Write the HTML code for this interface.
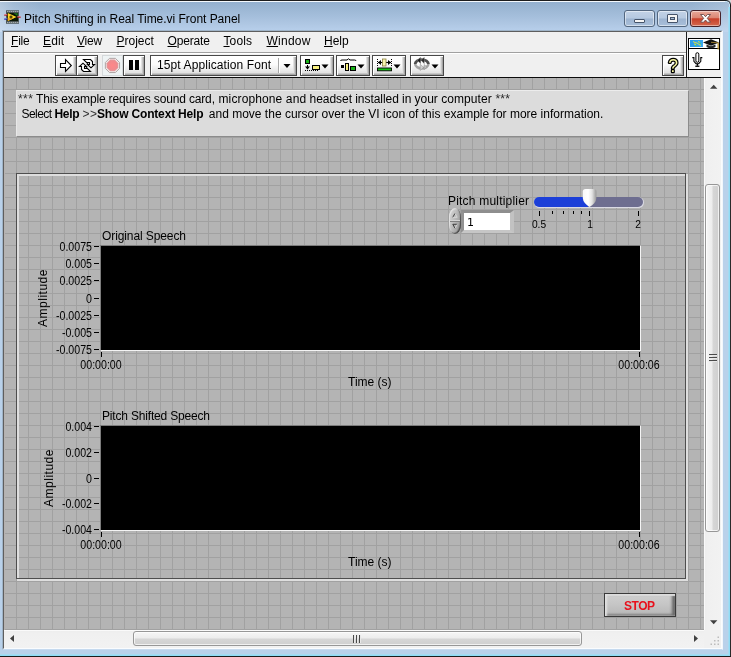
<!DOCTYPE html>
<html>
<head>
<meta charset="utf-8">
<title>Pitch Shifting in Real Time.vi Front Panel</title>
<style>
*{box-sizing:border-box;margin:0;padding:0}
html,body{width:731px;height:657px;overflow:hidden}
body{position:relative;background:#dadada;font-family:"Liberation Sans",sans-serif;font-size:12px;color:#000;line-height:14px}
.a{position:absolute}
.t{position:absolute;white-space:pre;line-height:14px;height:14px;will-change:opacity}
/* window frame */
#frame{left:0;top:0;width:731px;height:657px;background:#b9d1ea;border-radius:0 5px 0 0;overflow:hidden}
#titlebg{left:0;top:0;width:731px;height:32px;background:linear-gradient(180deg,#94b0ce 0px,#94b0ce 2px,#9bb6d3 8px,#a4bedb 16px,#afc7e3 24px,#b6ceea 30px)}
#titlehl{left:0;top:0;width:731px;height:32px;background:linear-gradient(90deg,rgba(255,255,255,.28) 0,rgba(255,255,255,.12) 14px,rgba(255,255,255,0) 40px,rgba(255,255,255,0) 690px,rgba(255,255,255,.16) 731px)}
/* client */
#client{left:4px;top:32px;width:717px;height:616px;background:#f0f0f0}
#panel{left:4px;top:78px;width:700px;height:552px;background-color:#b4b4b4;
 background-image:linear-gradient(90deg,#a1a1a1 1px,transparent 1px),linear-gradient(180deg,#a1a1a1 1px,transparent 1px);
 background-size:12px 12px;background-position:0px -1px;overflow:hidden}
.menu{top:34px;font-size:12px;line-height:14px;white-space:pre}
.menu u{text-decoration:underline;text-decoration-thickness:1px;text-underline-offset:0.5px}
.tb{position:absolute;top:55px;height:21px;border:1px solid #484848;background:linear-gradient(180deg,#ffffff 0,#fbfbfb 45%,#e6e6e6 80%,#d0d0d0 100%);box-shadow:inset 1px 1px 0 #fff,inset -1px -1px 0 #a6a6a6,inset -2px -2px 0 #c6c6c6,inset -3px -3px 0 #e2e2e2}
.sc{font-size:12px;transform:scaleX(.885);transform-origin:right center;text-align:right}
.scc{font-size:12px;transform:scaleX(.885);transform-origin:center center;text-align:center}
</style>
</head>
<body>
<div id="frame" class="a">
<div id="titlebg" class="a"></div>
<div id="titlehl" class="a"></div>
<!-- outer edges -->
<div class="a" style="left:0;top:0;width:731px;height:1px;background:#1c1c1c"></div>
<div class="a" style="left:0;top:1px;width:726px;height:1px;background:#f4f8fc"></div>
<div class="a" style="left:730px;top:0;width:1px;height:657px;background:#2a2a2a"></div>
<div class="a" style="left:728px;top:7px;width:1px;height:648px;background:#a6daf0"></div><div class="a" style="left:729px;top:7px;width:1px;height:649px;background:#8fdcf6"></div>
<div class="a" style="left:0;top:656px;width:731px;height:1px;background:#1c1c1c"></div>
<div class="a" style="left:0;top:654px;width:728px;height:1px;background:#a6daf0"></div><div class="a" style="left:0;top:655px;width:730px;height:1px;background:#8fdcf6"></div>
<svg class="a" style="left:725px;top:0px" width="6" height="7" viewBox="0 0 6 7"><path d="M1.500 0 L6 0 L6 4.500 L5.500 4.500 A4 4 0 0 0 1.500 0.500 Z" fill="#dadada"/><path d="M0 1.500 L1.500 1.500 A3 3 0 0 1 4.500 4.500 L4.500 7" fill="none" stroke="#c8e4f4" stroke-width="1"/><path d="M0 0.500 L1.500 0.500 A4 4 0 0 1 5.500 4.500 L5.500 7" fill="none" stroke="#1c1c1c" stroke-width="1"/></svg>
<!-- inner frame edges -->
<div class="a" style="left:2px;top:30px;width:721px;height:620px;border:1px solid #9fb4c8;border-right-color:#f2f6fb;border-bottom-color:#c6daef"></div>
<div class="a" style="left:3px;top:31px;width:719px;height:618px;border:1px solid #5e5e5e;border-right-color:#fafcfe;border-bottom-color:#fafcfe"></div>
</div>

<!-- title -->
<svg class="a" style="left:3px;top:10px" width="18" height="14" viewBox="0 0 18 16" preserveAspectRatio="none">
 <rect x="3" y="0.300" width="13" height="15.400" fill="#4c565a"/>
 <rect x="4" y="3.300" width="11" height="9.400" fill="#0a1606"/>
 <g fill="#d4dada"><rect x="4.300" y="1.200" width="1" height="1.200"/><rect x="6.300" y="1.200" width="1" height="1.200"/><rect x="8.300" y="1.200" width="1" height="1.200"/><rect x="10.300" y="1.200" width="1" height="1.200"/><rect x="12.300" y="1.200" width="1" height="1.200"/><rect x="14.300" y="1.200" width="1" height="1.200"/>
 <rect x="4.300" y="13.600" width="1" height="1.200"/><rect x="6.300" y="13.600" width="1" height="1.200"/><rect x="8.300" y="13.600" width="1" height="1.200"/><rect x="10.300" y="13.600" width="1" height="1.200"/><rect x="12.300" y="13.600" width="1" height="1.200"/><rect x="14.300" y="13.600" width="1" height="1.200"/></g>
 <rect x="1.200" y="4.600" width="3" height="0.900" fill="#f0a0a8"/><rect x="1.200" y="5.400" width="3.300" height="1.100" fill="#b01828"/>
 <rect x="1.200" y="9" width="3" height="0.900" fill="#c8d0f0"/><rect x="1.200" y="9.800" width="3.300" height="1.200" fill="#1010b0"/>
 <rect x="14.300" y="7" width="3.400" height="0.900" fill="#e08088"/><rect x="14.300" y="7.800" width="3.400" height="1.100" fill="#a81828"/>
 <path d="M10.500 3.600 L14.600 3.600 L14.600 6.800 Z" fill="#1e7a1e"/>
 <path d="M4.800 3.300 L13.600 8 L4.800 12.700 Z" fill="#ffd828"/>
 <path d="M4.800 9.200 L4.800 12.700 L11 9.400 Z" fill="#f0a820"/>
 <path d="M8 6.200 L8 9.800 M6.300 8 L9.700 8" stroke="#2a2400" stroke-width="1.300"/>
</svg>
<div class="t" style="left:24px;top:12px;font-size:12px;letter-spacing:-0.03px">Pitch Shifting in Real Time.vi Front Panel</div>

<!-- caption buttons -->
<div class="a" style="left:624px;top:10px;width:31px;height:17px;border:1px solid #53677f;border-radius:3px;background:linear-gradient(180deg,#c2d2e6 0,#b6c9e0 48%,#9db4d0 52%,#a8bfda 100%);box-shadow:inset 0 0 0 1px rgba(255,255,255,.5)"></div>
<div class="a" style="left:634px;top:19px;width:11px;height:4px;border:1px solid #45546a;border-radius:1px;background:#f4f4f4"></div>
<div class="a" style="left:657px;top:10px;width:31px;height:17px;border:1px solid #53677f;border-radius:3px;background:linear-gradient(180deg,#c2d2e6 0,#b6c9e0 48%,#9db4d0 52%,#a8bfda 100%);box-shadow:inset 0 0 0 1px rgba(255,255,255,.5)"></div>
<div class="a" style="left:667px;top:14px;width:11px;height:9px;border:1px solid #45546a;border-radius:1px;background:#f4f4f4"></div>
<div class="a" style="left:670px;top:17px;width:5px;height:3px;border:1px solid #45546a;background:#a8bcd4"></div>
<div class="a" style="left:690px;top:10px;width:31px;height:17px;border:1px solid #47232a;border-radius:3px;background:linear-gradient(180deg,#e8a99a 0,#dc8673 45%,#c8402a 52%,#d4684e 100%);box-shadow:inset 0 0 0 1px rgba(255,255,255,.45)"></div>
<svg class="a" style="left:698px;top:13px" width="15" height="12" viewBox="0 0 15 12"><path d="M2.500 1.500 L5.600 1.500 L7.500 3.700 L9.400 1.500 L12.500 1.500 L9.300 5.350 L12.500 9.200 L9.400 9.200 L7.500 7 L5.600 9.200 L2.500 9.200 L5.700 5.350 Z" fill="#fff" stroke="#6a4a4a" stroke-width="0.900" stroke-linejoin="round"/></svg>

<!-- client -->
<div id="client" class="a"></div>
<div class="a" style="left:4px;top:52px;width:682px;height:1px;background:#a0a0a0"></div>
<div class="a" style="left:4px;top:53px;width:682px;height:1px;background:#ffffff"></div>
<div class="a" style="left:4px;top:77px;width:717px;height:1px;background:#0c0c0c"></div>
<div class="a" style="left:686px;top:32px;width:1px;height:45px;background:#202020"></div>

<!-- menus -->
<div class="t menu" style="left:11px;letter-spacing:-0.2px"><u>F</u>ile</div>
<div class="t menu" style="left:43px;letter-spacing:0.15px"><u>E</u>dit</div>
<div class="t menu" style="left:77px;letter-spacing:-0.25px"><u>V</u>iew</div>
<div class="t menu" style="left:116.500px;letter-spacing:0px"><u>P</u>roject</div>
<div class="t menu" style="left:167.500px;letter-spacing:-0.15px"><u>O</u>perate</div>
<div class="t menu" style="left:223.500px;letter-spacing:0.1px"><u>T</u>ools</div>
<div class="t menu" style="left:266.500px;letter-spacing:0.25px"><u>W</u>indow</div>
<div class="t menu" style="left:324px;letter-spacing:0px"><u>H</u>elp</div>

<!-- TOOLBAR -->
<div id="toolbar">
<!-- run -->
<div class="tb" style="left:55px;width:22px"></div>
<svg class="a" style="left:58px;top:57px" width="16" height="17" viewBox="0 0 16 17"><path d="M2.5 6.5 L7.5 6.5 L7.5 2.7 L13.3 8.5 L7.5 14.3 L7.5 10.5 L2.5 10.5 Z" fill="#fff" stroke="#000" stroke-width="1.1" stroke-linejoin="miter"/></svg>
<!-- run continuously -->
<div class="tb" style="left:76px;width:22px"></div>
<svg class="a" style="left:78px;top:57px" width="18" height="17" viewBox="0 0 18 17">
 <g fill="#fff" stroke="#000" stroke-width="1.1" stroke-linejoin="miter">
 <path id="rc" d="M5.500 2.500 L12.500 2.500 L14.500 4.500 L14.500 7.500 L16.500 7.500 L13 10.800 L9.500 7.500 L11.500 7.500 L11.500 5.500 L8.500 5.500 Z"/>
 <path d="M5.500 2.500 L12.500 2.500 L14.500 4.500 L14.500 7.500 L16.500 7.500 L13 10.800 L9.500 7.500 L11.500 7.500 L11.500 5.500 L8.500 5.500 Z" transform="rotate(180 9 8.500)"/>
 <path d="M8.500 5.500 L11 8.300 M9.500 11.500 L7 8.700" fill="none"/>
 </g>
</svg>
<!-- abort -->
<div class="a" style="left:102px;top:55px;width:21px;height:21px;background:#eef3f4;border:1px solid #d4d8da"></div>
<svg class="a" style="left:104px;top:57px" width="17" height="17" viewBox="0 0 17 17"><defs><radialGradient id="ab" cx="0.5" cy="0.5" r="0.6"><stop offset="0" stop-color="#ff8688"/><stop offset="1" stop-color="#e88c90"/></radialGradient></defs><path d="M5.51 1.35 L11.39 1.35 L15.55 5.51 L15.55 11.39 L11.39 15.55 L5.51 15.55 L1.35 11.39 L1.35 5.51 Z" fill="#f3eaea" stroke="#a89c9c" stroke-width="0.9"/><path d="M6.13 2.85 L10.77 2.85 L14.05 6.13 L14.05 10.77 L10.77 14.05 L6.13 14.05 L2.85 10.77 L2.85 6.13 Z" fill="url(#ab)" stroke="#d8b0b0" stroke-width="0.5"/></svg>
<!-- pause -->
<div class="tb" style="left:123px;width:22px"></div>
<div class="a" style="left:129px;top:60px;width:4px;height:10px;background:#000"></div>
<div class="a" style="left:135px;top:60px;width:4px;height:10px;background:#000"></div>
<!-- font ring -->
<div class="tb" style="left:150px;width:147px"></div>
<div class="t" style="left:157px;top:58px;font-size:12px;letter-spacing:0.1px">15pt Application Font</div>
<div class="a" style="left:278px;top:58px;width:1px;height:15px;background:#a8a8a8"></div>
<div class="a" style="left:279px;top:58px;width:1px;height:15px;background:#fff"></div>
<svg class="a" style="left:282px;top:62px" width="10" height="8" viewBox="0 0 10 8"><path d="M1.500 2 L8.500 2 L5 6 Z" fill="#000"/></svg>
<!-- align -->
<div class="tb" style="left:300px;width:34px"></div>
<svg class="a" style="left:302px;top:57px" width="32" height="17" viewBox="0 0 32 17">
 <rect x="3.500" y="2.500" width="4" height="4" fill="#18b018" stroke="#000" stroke-width="1"/>
 <path d="M5.500 8 L5.500 10" stroke="#000" stroke-width="1"/><path d="M3 9.500 L8 9.500 L5.500 12.500 Z" fill="#000"/>
 <path d="M3 13.500 L17 13.500" stroke="#000" stroke-width="1" stroke-dasharray="1 1"/>
 <rect x="10.500" y="8.500" width="7" height="4" fill="#f8f080" stroke="#000" stroke-width="1"/>
 <path d="M19.500 7.500 L26.500 7.500 L23 11.500 Z" fill="#000"/>
</svg>
<!-- distribute -->
<div class="tb" style="left:336px;width:34px"></div>
<svg class="a" style="left:338px;top:57px" width="32" height="17" viewBox="0 0 32 17">
 <path d="M2.500 4 Q2.500 3 4 3 L9 3 L10.500 1.800 L12 3 L16.500 3 Q18 3 18 4" fill="none" stroke="#000" stroke-width="1"/>
 <rect x="3" y="8" width="3" height="3" fill="#000"/>
 <rect x="7.500" y="6.500" width="3" height="7" fill="#f8f080" stroke="#000" stroke-width="1"/>
 <rect x="12.500" y="9.500" width="5" height="4" fill="#18b018" stroke="#000" stroke-width="1"/>
 <path d="M19.500 7.500 L26.500 7.500 L23 11.500 Z" fill="#000"/>
</svg>
<!-- resize -->
<div class="tb" style="left:372px;width:34px"></div>
<svg class="a" style="left:374px;top:57px" width="32" height="17" viewBox="0 0 32 17">
 <path d="M3.500 2 L3.500 10 M17.500 2 L17.500 10" stroke="#000" stroke-width="1" stroke-dasharray="1 1"/>
 <path d="M4 5.500 L17 5.500" stroke="#000" stroke-width="1.100"/>
 <path d="M4 5.500 L7 3 L7 8 Z M17 5.500 L14 3 L14 8 Z" fill="#000"/>
 <rect x="8.500" y="2" width="3.500" height="7" fill="#f8f4b0" stroke="#8a8040" stroke-width="0.800"/>
 <rect x="3.500" y="11" width="14" height="2.800" fill="#18c018" stroke="#000" stroke-width="0.900"/>
 <path d="M19.500 7.500 L26.500 7.500 L23 11.500 Z" fill="#000"/>
</svg>
<!-- reorder -->
<div class="tb" style="left:410px;width:34px"></div>
<svg class="a" style="left:412px;top:57px" width="32" height="17" viewBox="0 0 32 17">
 <path d="M3.200 7 A6.600 4.400 0 0 1 16.400 7" stroke="#4e4e4e" stroke-width="2.900" fill="none"/>
 <path d="M3.200 7 A6.600 4.400 0 0 0 16.400 7" stroke="#a4a4a4" stroke-width="2.500" fill="none"/>
 <path d="M8.700 -0.100 L5.400 3.300 L8.700 6.900 Z" fill="#1e1e1e" stroke="#dcdcdc" stroke-width="0.250"/>
 <path d="M12.400 0.100 L9 3.300 L12.400 6.900 Z" fill="#2a2a2a" stroke="#dcdcdc" stroke-width="0.250"/>
 <path d="M8.200 7.200 L11.600 10.300 L8.200 13.500 Z" fill="#d0d0d0" stroke="#8c8c8c" stroke-width="0.500"/>
 <path d="M12.100 7.500 L15.200 10.100 L12.100 12.600 Z" fill="#c0c0c0" stroke="#8c8c8c" stroke-width="0.500"/>
 <path d="M19.500 7.500 L26.500 7.500 L23 11.500 Z" fill="#000"/>
</svg>
<!-- help -->
<div class="tb" style="left:662px;width:22px"></div>
<svg class="a" style="left:663px;top:56px;will-change:opacity" width="20" height="19" viewBox="0 0 20 19"><text x="10.100" y="16.200" text-anchor="middle" font-family="Liberation Sans, sans-serif" font-size="17.500" font-weight="normal" fill="#f9f8a2" stroke="#000" stroke-width="2.500" paint-order="stroke" stroke-linejoin="round">?</text></svg>
<!-- VI icon -->
<div class="a" style="left:688px;top:38px;width:32px;height:32px;background:#fff;border:1px solid #000"></div>
<div class="a" style="left:689px;top:48px;width:30px;height:1px;background:#000"></div>
<div class="a" style="left:690px;top:40px;width:13px;height:7px;background:linear-gradient(90deg,#2a9ae8,#38a8f0)"></div>
<svg class="a" style="left:690px;top:40px" width="13" height="7" viewBox="0 0 13 7"><path d="M3 1.500 L5 2.500 L7 3 L9 4.500 L11 5.500 M4 4 L6 4.500 M8 1.500 L10 2.500" stroke="#e0e040" stroke-width="1" fill="none"/><path d="M5 5.500 L7 5 M9 3 L11 3.500" stroke="#50d060" stroke-width="1"/></svg>
<svg class="a" style="left:702px;top:38px" width="19" height="14" viewBox="0 0 19 14">
 <path d="M1 4.500 L9 1.200 L17 4.500 L9 7.800 Z" fill="#101010"/>
 <path d="M4.500 6.500 L4.500 9 Q9 11.500 13.500 9 L13.500 6.500 L9 8.300 Z" fill="#282828"/>
 <path d="M16.200 4.800 L16.200 11.500" stroke="#b89030" stroke-width="1.3"/>
 <path d="M9 4.300 L16 4.800" stroke="#b89030" stroke-width="0.8"/>
</svg>
<svg class="a" style="left:691px;top:51px" width="13" height="17" viewBox="0 0 13 17">
 <rect x="4.900" y="1.700" width="2.900" height="9.600" rx="1.450" fill="#fff" stroke="#000" stroke-width="1"/>
 <path d="M1.300 6.600 L2.900 6.600 L2.900 10.300 L5 12.700 L7.700 12.700 L9.800 10.300 L9.800 6.600 L11.300 6.600" fill="none" stroke="#000" stroke-width="1.050"/>
 <path d="M6.350 12.700 L6.350 14.800" stroke="#000" stroke-width="1.300"/>
 <rect x="4.300" y="14.600" width="4.100" height="1.300" fill="#000"/>
</svg>
</div>

<!-- PANEL -->
<div id="panel" class="a"></div>
<div class="a" style="left:4px;top:78px;width:1px;height:552px;background:#b5b2b0"></div>
<div id="content">
<div class="a" style="left:16px;top:90px;width:673px;height:47px;background:#dcdcdc;border-top:1px solid #ececec;border-left:1px solid #e8e8e8;border-right:1px solid #8c8c8c;border-bottom:1px solid #8c8c8c"></div>
<div class="t" style="left:18px;top:92px;letter-spacing:0.4px;color:#2a2a2a">***</div><div class="t" style="left:36px;top:92px;letter-spacing:-0.16px">This example requires sound card,</div><div class="t" style="left:218.5px;top:92px;letter-spacing:0.121px">microphone and</div><div class="t" style="left:309.6px;top:92px;letter-spacing:-0.051px">headset installed in your</div><div class="t" style="left:441.2px;top:92px;letter-spacing:0.066px">computer</div><div class="t" style="left:495.4px;top:92px;letter-spacing:0.25px;color:#2a2a2a">***</div>
<div class="t" style="left:21.500px;top:107px;letter-spacing:-0.55px">Select</div><div class="t" style="left:54.500px;top:107px;letter-spacing:-0.33px;font-weight:bold">Help</div><div class="t" style="left:82.500px;top:107px;letter-spacing:0.6px;color:#303030">&gt;&gt;</div><div class="t" style="left:97px;top:107px;letter-spacing:-0.17px;font-weight:bold">Show Context Help</div><div class="t" style="left:208.800px;top:107px;letter-spacing:0.005px">and move the cursor over the VI icon of this example for more information.</div>
<div class="a" style="left:17px;top:174px;width:671px;height:407px;border:2px solid #dedede"></div>
<div class="a" style="left:16px;top:173px;width:670px;height:406px;border:1px solid #4e4e4e"></div>
<div class="t" style="left:448px;top:194px;letter-spacing:0.2px">Pitch multiplier</div>
<div class="a" style="left:449px;top:208px;width:12px;height:26px;border-radius:6px/9px;background:linear-gradient(105deg,#d6d6d6 0%,#c0c0c0 40%,#a6a6a6 72%,#5c5c5c 100%);box-shadow:inset -1px -1px 1px rgba(60,60,60,.8),inset 1px 1px 1px rgba(230,230,230,.9)"></div>
<div class="a" style="left:450px;top:220px;width:10px;height:1px;background:#d4d4d4"></div>
<div class="a" style="left:450px;top:221px;width:10px;height:1px;background:#808080"></div>
<svg class="a" style="left:450px;top:211px" width="10" height="20" viewBox="0 0 10 20"><path d="M2.800 6.300 L5 2.300" stroke="#3c3c3c" stroke-width="1" fill="none"/><path d="M5 2.300 L7.200 6.300 L2.800 6.300" stroke="#dcdcdc" stroke-width="0.800" fill="none"/><path d="M7.200 13.300 L2.800 13.300 L5 17.300" stroke="#3c3c3c" stroke-width="1" fill="none"/><path d="M5 17.300 L7.200 13.300" stroke="#dcdcdc" stroke-width="0.800" fill="none"/></svg>
<div class="a" style="left:461px;top:210px;width:53px;height:23px;background:#fff;border-style:solid;border-width:3px 4px 3px 3px;border-color:#8e8e8e #c2c2c2 #c6c6c6 #929292"></div>
<div class="t" style="left:467px;top:216px;font-family:'DejaVu Sans',sans-serif;font-size:11px">1</div>
<div class="a" style="left:534px;top:197px;width:109.500px;height:11px;border-radius:6px;background:#dadae4"></div>
<div class="a" style="left:534px;top:197px;width:109px;height:10px;border-radius:5px;background:linear-gradient(90deg,#1c3fd8 0,#1c3fd8 54px,#6e6e90 54px)"></div>
<svg class="a" style="left:582px;top:188px" width="16" height="20" viewBox="0 0 16 20"><defs><linearGradient id="tg" x1="0" x2="1" y1="0" y2="0"><stop offset="0" stop-color="#f8f8f8"/><stop offset="0.400" stop-color="#ffffff"/><stop offset="0.680" stop-color="#e2e2e2"/><stop offset="1" stop-color="#969696"/></linearGradient></defs><path d="M0.800 3.500 Q0.800 1 3.500 1 L11.700 1 Q14.400 1 14.400 3.500 L14.400 10 Q14 15.300 7.600 18.900 Q1.200 15.300 0.800 10 Z" fill="url(#tg)"/></svg>
<div class="a" style="left:539px;top:211px;width:1px;height:5px;background:#000"></div>
<div class="a" style="left:589px;top:211px;width:1px;height:5px;background:#000"></div>
<div class="a" style="left:638px;top:211px;width:1px;height:5px;background:#000"></div>
<div class="a" style="left:552px;top:211px;width:1px;height:3px;background:#000"></div>
<div class="a" style="left:563px;top:211px;width:1px;height:3px;background:#000"></div>
<div class="a" style="left:573px;top:211px;width:1px;height:3px;background:#000"></div>
<div class="a" style="left:581px;top:211px;width:1px;height:3px;background:#000"></div>
<div class="t scc" style="left:509px;width:60px;top:217px;font-size:11px;transform:scaleX(.93)">0.5</div>
<div class="t scc" style="left:560px;width:60px;top:217px;font-size:11px;transform:scaleX(.93)">1</div>
<div class="t scc" style="left:608px;width:60px;top:217px;font-size:11px;transform:scaleX(.93)">2</div>
<div class="a" style="left:100px;top:245px;width:541px;height:106px;background:#000;border-left:1px solid #7c7c7c;border-top:1px solid #7c7c7c;border-right:1px solid #f4f4f4;border-bottom:1px solid #f4f4f4"></div>
<div class="t" style="left:102px;top:229px;letter-spacing:-0.1px">Original Speech</div>
<div class="a" style="left:94px;top:246px;width:5px;height:1px;background:#000"></div>
<div class="t sc" style="left:32px;width:60px;top:240px">0.0075</div>
<div class="a" style="left:94px;top:263px;width:5px;height:1px;background:#000"></div>
<div class="t sc" style="left:32px;width:60px;top:257px">0.005</div>
<div class="a" style="left:94px;top:280px;width:5px;height:1px;background:#000"></div>
<div class="t sc" style="left:32px;width:60px;top:274px">0.0025</div>
<div class="a" style="left:94px;top:298px;width:5px;height:1px;background:#000"></div>
<div class="t sc" style="left:32px;width:60px;top:292px">0</div>
<div class="a" style="left:94px;top:315px;width:5px;height:1px;background:#000"></div>
<div class="t sc" style="left:32px;width:60px;top:309px">-0.0025</div>
<div class="a" style="left:94px;top:332px;width:5px;height:1px;background:#000"></div>
<div class="t sc" style="left:32px;width:60px;top:326px">-0.005</div>
<div class="a" style="left:94px;top:349px;width:5px;height:1px;background:#000"></div>
<div class="t sc" style="left:32px;width:60px;top:343px">-0.0075</div>
<div class="a" style="left:101px;top:352px;width:1px;height:5px;background:#000"></div>
<div class="a" style="left:639px;top:352px;width:1px;height:5px;background:#000"></div>
<div class="t scc" style="left:71px;width:60px;top:358px">00:00:00</div>
<div class="t scc" style="left:609px;width:60px;top:358px">00:00:06</div>
<div class="t" style="left:348px;top:375px;letter-spacing:0px">Time (s)</div>
<div class="t" style="left:13px;top:291px;width:60px;text-align:center;transform:rotate(-90deg);letter-spacing:0.5px">Amplitude</div>
<div class="a" style="left:100px;top:425px;width:541px;height:106px;background:#000;border-left:1px solid #7c7c7c;border-top:1px solid #7c7c7c;border-right:1px solid #f4f4f4;border-bottom:1px solid #f4f4f4"></div>
<div class="t" style="left:102px;top:409px;letter-spacing:-0.18px">Pitch Shifted Speech</div>
<div class="a" style="left:94px;top:426px;width:5px;height:1px;background:#000"></div>
<div class="t sc" style="left:32px;width:60px;top:420px">0.004</div>
<div class="a" style="left:94px;top:452px;width:5px;height:1px;background:#000"></div>
<div class="t sc" style="left:32px;width:60px;top:446px">0.002</div>
<div class="a" style="left:94px;top:478px;width:5px;height:1px;background:#000"></div>
<div class="t sc" style="left:32px;width:60px;top:472px">0</div>
<div class="a" style="left:94px;top:503px;width:5px;height:1px;background:#000"></div>
<div class="t sc" style="left:32px;width:60px;top:497px">-0.002</div>
<div class="a" style="left:94px;top:529px;width:5px;height:1px;background:#000"></div>
<div class="t sc" style="left:32px;width:60px;top:523px">-0.004</div>
<div class="a" style="left:101px;top:532px;width:1px;height:5px;background:#000"></div>
<div class="a" style="left:639px;top:532px;width:1px;height:5px;background:#000"></div>
<div class="t scc" style="left:71px;width:60px;top:538px">00:00:00</div>
<div class="t scc" style="left:609px;width:60px;top:538px">00:00:06</div>
<div class="t" style="left:348px;top:555px;letter-spacing:0px">Time (s)</div>
<div class="t" style="left:19px;top:471px;width:60px;text-align:center;transform:rotate(-90deg);letter-spacing:0.5px">Amplitude</div>
<div class="a" style="left:604px;top:593px;width:72px;height:24px;border:1px solid #3a3a3a;background:linear-gradient(180deg,#d0d0d0 0,#c6c6c6 45%,#b6b6b6 100%);box-shadow:inset 2px 0 2px #e2e2e2,inset 0 2px 1px #dadada,inset -3px 0 3px #666,inset 0 -2px 2px #888"></div>
<div class="t" style="left:624px;top:599px;font-weight:bold;color:#e8101c;letter-spacing:-0.45px">STOP</div>
</div>

<!-- SCROLLBARS -->
<div id="scroll">
<!-- vertical -->
<div class="a" style="left:704px;top:78px;width:17px;height:552px;background:linear-gradient(90deg,#fafafa 0,#fafafa 1px,#eeeeee 1px,#f0f0f0 4px,#f2f2f2 100%)"></div>
<svg class="a" style="left:708px;top:83px" width="11" height="8" viewBox="0 0 11 8"><path d="M5.700 1.800 L9.400 5.800 L2 5.800 Z" fill="#404040"/></svg>
<svg class="a" style="left:708px;top:618px" width="11" height="8" viewBox="0 0 11 8"><path d="M5.700 6.200 L9.400 2.200 L2 2.200 Z" fill="#404040"/></svg>
<div class="a" style="left:705px;top:184px;width:15px;height:348px;border:1px solid #979797;border-radius:3px;background:linear-gradient(90deg,#f6f6f6 0,#ededed 45%,#d6d6d6 55%,#cfcfcf 100%);box-shadow:inset 0 0 0 1px rgba(255,255,255,.7)"></div>
<div class="a" style="left:709px;top:354px;width:8px;height:2px;background:linear-gradient(180deg,#4a4a4a 50%,#e8e8e8 50%)"></div>
<div class="a" style="left:709px;top:357px;width:8px;height:2px;background:linear-gradient(180deg,#4a4a4a 50%,#e8e8e8 50%)"></div>
<div class="a" style="left:709px;top:360px;width:8px;height:2px;background:linear-gradient(180deg,#4a4a4a 50%,#e8e8e8 50%)"></div>
<!-- horizontal -->
<div class="a" style="left:4px;top:630px;width:700px;height:18px;background:linear-gradient(180deg,#fafafa 0,#fafafa 1px,#eeeeee 1px,#f0f0f0 4px,#f2f2f2 100%)"></div>
<svg class="a" style="left:9px;top:634px" width="8" height="10" viewBox="0 0 8 10"><path d="M1 4.500 L5 1 L5 8 Z" fill="#404040"/></svg>
<svg class="a" style="left:692px;top:634px" width="8" height="10" viewBox="0 0 8 10"><path d="M6 4.500 L2 1 L2 8 Z" fill="#404040"/></svg>
<div class="a" style="left:133px;top:631px;width:449px;height:15px;border:1px solid #979797;border-radius:3px;background:linear-gradient(180deg,#f6f6f6 0,#ededed 45%,#d6d6d6 55%,#cfcfcf 100%);box-shadow:inset 0 0 0 1px rgba(255,255,255,.7)"></div>
<div class="a" style="left:353px;top:635px;width:2px;height:8px;background:linear-gradient(90deg,#4a4a4a 50%,#e8e8e8 50%)"></div>
<div class="a" style="left:356px;top:635px;width:2px;height:8px;background:linear-gradient(90deg,#4a4a4a 50%,#e8e8e8 50%)"></div>
<div class="a" style="left:359px;top:635px;width:2px;height:8px;background:linear-gradient(90deg,#4a4a4a 50%,#e8e8e8 50%)"></div>
<!-- size grip -->
<div class="a" style="left:704px;top:630px;width:17px;height:18px;background:#f0f0f0"></div>
<svg class="a" style="left:709px;top:635px" width="12" height="12" viewBox="0 0 12 12"><g fill="#bcbcbc"><rect x="8.500" y="1.500" width="1.500" height="1.500"/><rect x="8.500" y="5" width="1.500" height="1.500"/><rect x="5" y="5" width="1.500" height="1.500"/><rect x="8.500" y="8.500" width="1.500" height="1.500"/><rect x="5" y="8.500" width="1.500" height="1.500"/><rect x="1.500" y="8.500" width="1.500" height="1.500"/></g></svg>
</div>
</body>
</html>
